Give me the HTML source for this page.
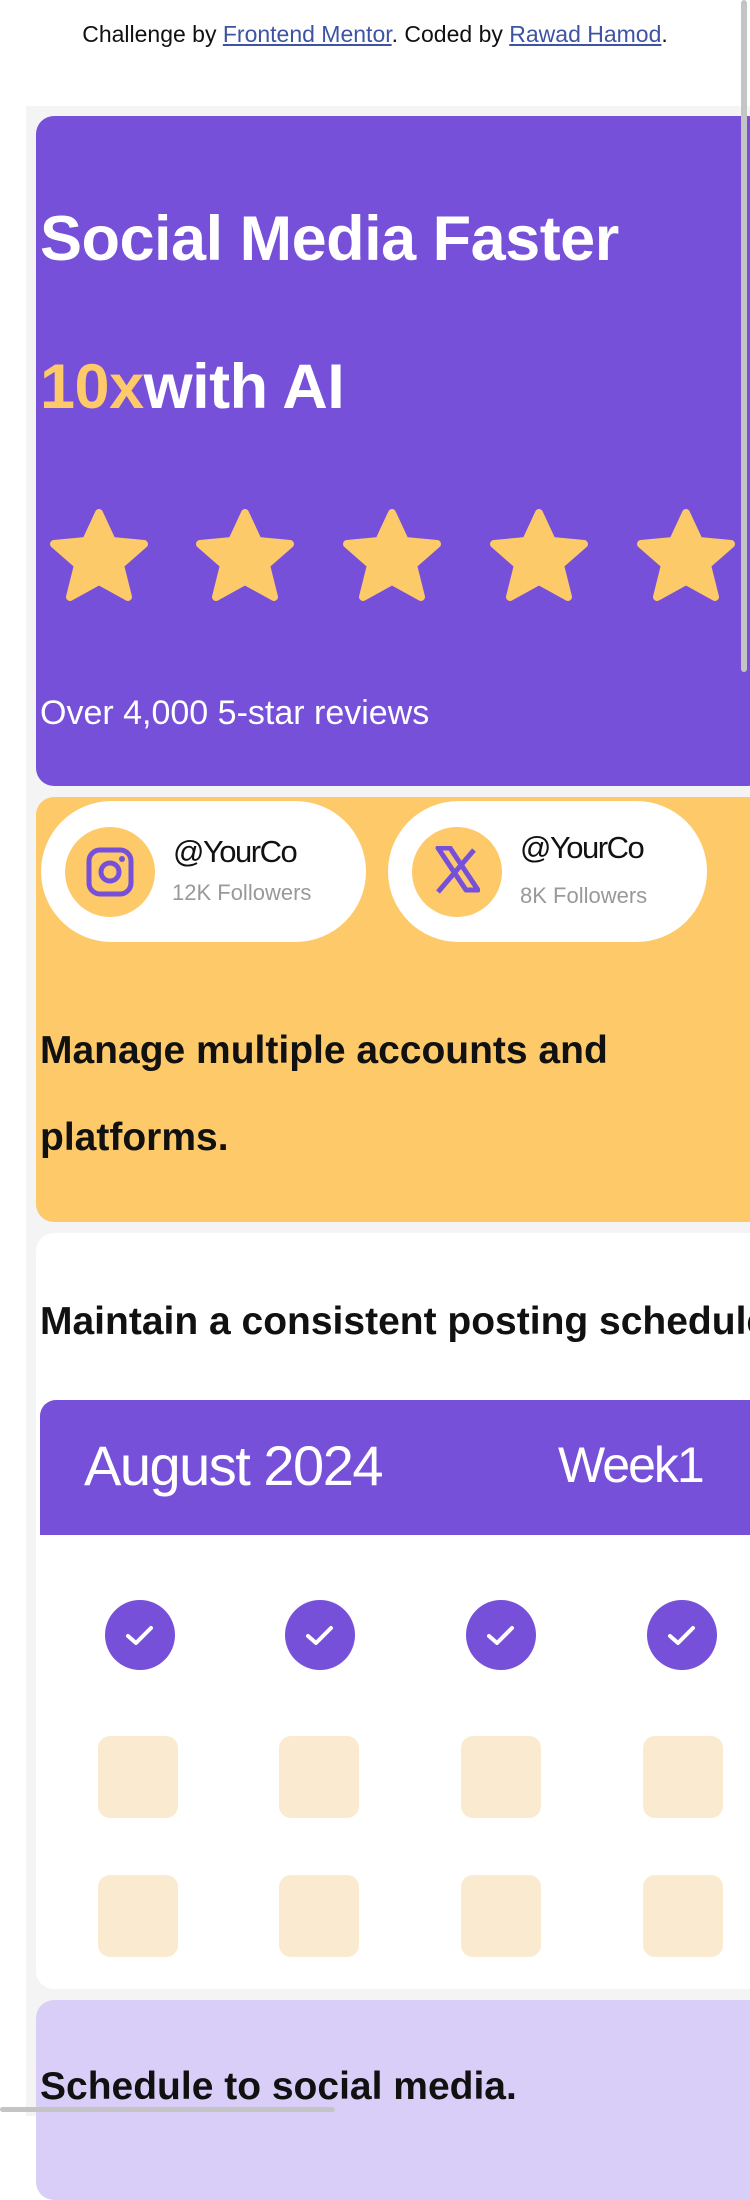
<!DOCTYPE html>
<html><head><meta charset="utf-8"><style>
*{margin:0;padding:0;box-sizing:border-box}
html,body{width:750px;height:2116px;overflow:hidden;background:#fff;font-family:"Liberation Sans",sans-serif}
.a{position:absolute;line-height:1}
.foot{top:23px;left:0;width:750px;text-align:center;font-size:23px;color:#111}
.foot a{color:#3e54a3;text-decoration:underline}
.gray{left:26px;top:106px;width:724px;height:2010px;background:#f4f4f4}
.card{left:36px;width:730px;border-radius:18px;overflow:hidden}
.h1{color:#fff;font-weight:bold;font-size:63px;letter-spacing:-0.5px;white-space:nowrap}
.pill{background:#fff;border-radius:72px;height:141px}
.ic{width:90px;height:90px;border-radius:50%;background:#fdc969}
.h2{font-weight:bold;font-size:39px;color:#111;white-space:nowrap}
.chk{width:70px;height:70px;border-radius:50%;background:#7650d9}
.sq{width:80px;height:82px;border-radius:12px;background:#faebd0}
</style></head><body>
<div class="a foot">Challenge by <a>Frontend Mentor</a>. Coded by <a>Rawad Hamod</a>.</div>
<div class="a gray"></div>

<div class="a card" style="top:116px;height:670px;background:#7650d9"></div>
<div class="a h1" style="left:40px;top:208px">Social Media Faster</div>
<div class="a h1" style="left:40px;top:356px"><span style="color:#fdc969">10x</span>with AI</div>
<svg class="a" style="left:36px;top:505px" width="714" height="100" viewBox="0 0 714 100">
<defs><path id="st" d="M0,-44 L13,-16 L45,-13 L21,8 L29,40 L0,24 L-29,40 L-21,8 L-45,-13 L-13,-16Z" fill="#fcca69" stroke="#fcca69" stroke-width="8" stroke-linejoin="round"/></defs>
<use href="#st" x="63" y="52"/><use href="#st" x="209" y="52"/><use href="#st" x="356" y="52"/><use href="#st" x="503" y="52"/><use href="#st" x="650" y="52"/>
</svg>
<div class="a" style="left:40px;top:696px;font-size:34px;color:#fff">Over 4,000 5-star reviews</div>

<div class="a card" style="top:797px;height:425px;background:#fdc969"></div>
<div class="a pill" style="left:41px;top:801px;width:325px"></div>
<div class="a pill" style="left:388px;top:801px;width:319px"></div>
<div class="a ic" style="left:65px;top:827px"></div>
<div class="a ic" style="left:412px;top:827px"></div>
<svg class="a" style="left:86px;top:846px" width="48" height="52" viewBox="0 0 48 52"><rect x="3" y="4" width="42" height="44" rx="11" fill="none" stroke="#7650d9" stroke-width="5"/><circle cx="24" cy="26" r="9" fill="none" stroke="#7650d9" stroke-width="5"/><circle cx="36" cy="13" r="3" fill="#7650d9"/></svg>
<svg class="a" style="left:434px;top:846px" width="46" height="50" viewBox="0 0 46 50"><path d="M4 2 L16 2 L44 44 L32 44Z" fill="none" stroke="#7650d9" stroke-width="5" stroke-linejoin="round"/><path d="M4 46 L40 4" stroke="#7650d9" stroke-width="5"/></svg>
<div class="a" style="left:173px;top:836px;font-size:31px;color:#111;letter-spacing:-1.5px">@YourCo</div>
<div class="a" style="left:172px;top:882px;font-size:22px;color:#999">12K Followers</div>
<div class="a" style="left:520px;top:832px;font-size:31px;color:#111;letter-spacing:-1.5px">@YourCo</div>
<div class="a" style="left:520px;top:885px;font-size:22px;color:#999">8K Followers</div>
<div class="a h2" style="left:40px;top:1031px">Manage multiple accounts and</div>
<div class="a h2" style="left:40px;top:1118px">platforms.</div>

<div class="a card" style="top:1233px;height:756px;background:#fff"></div>
<div class="a h2" style="left:40px;top:1302px">Maintain a consistent posting schedule.</div>
<div class="a" style="left:40px;top:1400px;width:710px;height:135px;background:#7650d9;border-radius:16px 0 0 0"></div>
<div class="a" style="left:84px;top:1438px;font-size:56px;color:#fff;letter-spacing:-1.5px">August 2024</div>
<div class="a" style="left:558px;top:1440px;font-size:50px;color:#fff;letter-spacing:-2px">Week1</div>
<div class="a chk" style="left:105px;top:1600px"></div>
<div class="a chk" style="left:285px;top:1600px"></div>
<div class="a chk" style="left:466px;top:1600px"></div>
<div class="a chk" style="left:647px;top:1600px"></div>
<svg class="a" style="left:0;top:1600px" width="750" height="70"><g fill="none" stroke="#fff" stroke-width="4" stroke-linecap="round" stroke-linejoin="round">
<path d="M128 36 L136 43 L151 28"/><path d="M308 36 L316 43 L331 28"/><path d="M489 36 L497 43 L512 28"/><path d="M670 36 L678 43 L693 28"/></g></svg>
<div class="a sq" style="left:98px;top:1736px"></div><div class="a sq" style="left:279px;top:1736px"></div><div class="a sq" style="left:461px;top:1736px"></div><div class="a sq" style="left:643px;top:1736px"></div>
<div class="a sq" style="left:98px;top:1875px"></div><div class="a sq" style="left:279px;top:1875px"></div><div class="a sq" style="left:461px;top:1875px"></div><div class="a sq" style="left:643px;top:1875px"></div>

<div class="a card" style="top:2000px;height:200px;background:#d9cef8"></div>
<div class="a h2" style="left:40px;top:2067px">Schedule to social media.</div>

<div class="a" style="left:741px;top:0;width:6px;height:672px;background:#c4c4c4;border-radius:3px"></div>
<div class="a" style="left:0;top:2107px;width:335px;height:5px;background:#c4c4c4;border-radius:3px"></div>
</body></html>
